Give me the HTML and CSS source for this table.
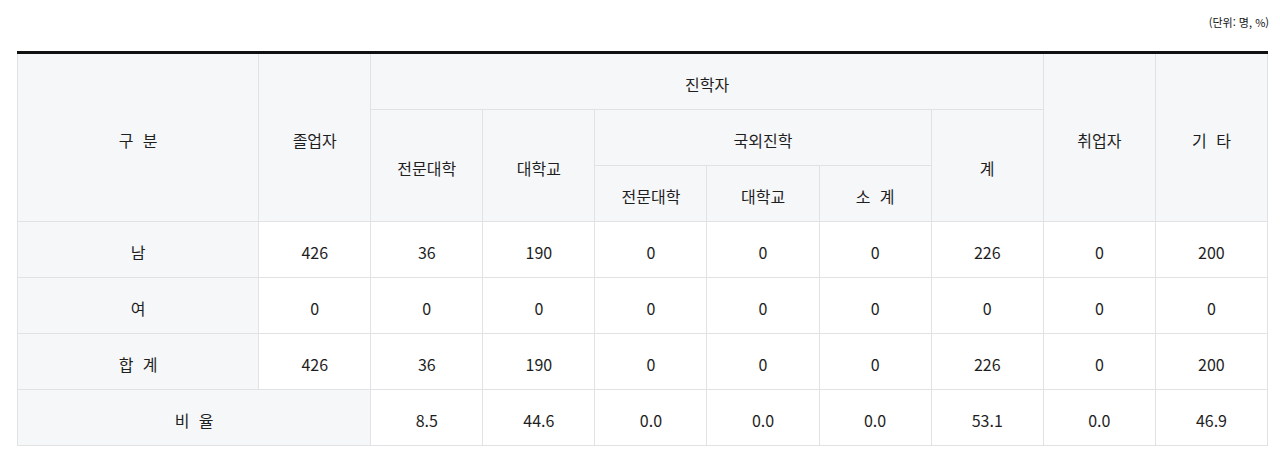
FILE: index.html
```html
<!DOCTYPE html>
<html lang="ko">
<head>
<meta charset="utf-8">
<link rel="stylesheet" href="styles.css">
</head>
<body>
<div class="wrap">
  <p class="unit">(단위: 명, %)</p>
  <table class="stats">
    <colgroup>
      <col class="c-first">
      <col class="c"><col class="c"><col class="c"><col class="c"><col class="c">
      <col class="c"><col class="c"><col class="c"><col class="c">
    </colgroup>
    <thead>
      <tr>
        <th rowspan="3" class="sp">구 분</th>
        <th rowspan="3">졸업자</th>
        <th colspan="6">진학자</th>
        <th rowspan="3">취업자</th>
        <th rowspan="3" class="sp">기 타</th>
      </tr>
      <tr>
        <th rowspan="2">전문대학</th>
        <th rowspan="2">대학교</th>
        <th colspan="3">국외진학</th>
        <th rowspan="2">계</th>
      </tr>
      <tr>
        <th>전문대학</th>
        <th>대학교</th>
        <th class="sp">소 계</th>
      </tr>
    </thead>
    <tbody>
      <tr>
        <th>남</th><td>426</td><td>36</td><td>190</td><td>0</td><td>0</td><td>0</td><td>226</td><td>0</td><td>200</td>
      </tr>
      <tr>
        <th>여</th><td>0</td><td>0</td><td>0</td><td>0</td><td>0</td><td>0</td><td>0</td><td>0</td><td>0</td>
      </tr>
      <tr>
        <th class="sp">합 계</th><td>426</td><td>36</td><td>190</td><td>0</td><td>0</td><td>0</td><td>226</td><td>0</td><td>200</td>
      </tr>
      <tr>
        <th colspan="2" class="sp">비 율</th><td>8.5</td><td>44.6</td><td>0.0</td><td>0.0</td><td>0.0</td><td>53.1</td><td>0.0</td><td>46.9</td>
      </tr>
    </tbody>
  </table>
</div>
</body>
</html>
```

FILE: styles.css
```css
html, body {
  margin: 0;
  padding: 0;
  background: #fff;
}
body {
  font-family: "Noto Sans CJK KR", "Noto Sans", sans-serif;
  color: #1e1e1e;
}
.wrap {
  padding: 14px 11px 0 17px;
}
.unit {
  margin: 0 0 21px;
  text-align: right;
  font-size: 11px;
  line-height: 16px;
  color: #111;
}
.stats {
  width: 1251px;
  border-collapse: collapse;
  table-layout: fixed;
  border-top: 3px solid #111;
  font-size: 16px;
}
.c-first { width: 241px; }
.c { width: 112px; }
.stats th,
.stats td {
  border: 1px solid #e1e2e4;
  height: 50px;
  padding: 5px 0 0;
  text-align: center;
  vertical-align: middle;
  font-weight: 400;
  line-height: 20px;
}
.stats th {
  background: #f6f7f9;
}
.stats td {
  background: #fff;
}
.stats thead tr:first-child th {
  border-top: 0;
}
.stats .sp {
  word-spacing: 5px;
}
```
